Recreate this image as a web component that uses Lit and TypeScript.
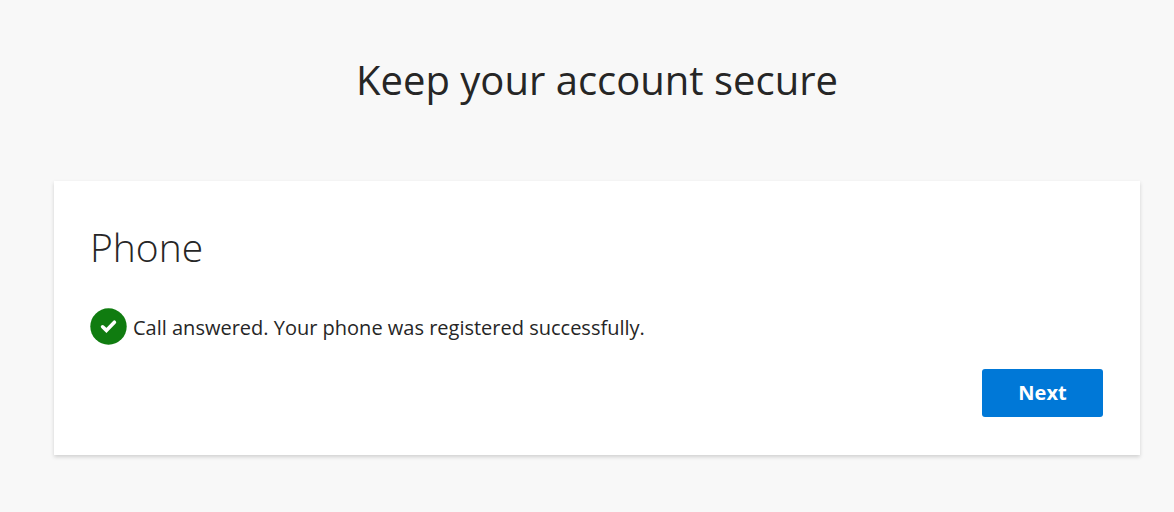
import { LitElement, html, css } from "lit";
import { customElement } from "lit/decorators.js";

@customElement("app-root")
export class AppRoot extends LitElement {
  static styles = css`
    :host {
      display: block;
      box-sizing: border-box;
      min-height: 100vh;
      padding: 52px 34px 56px 54px;
      background: #f8f8f8;
      color: #262626;
      font-family: "Segoe UI", "Open Sans", "Noto Sans", sans-serif;
    }
    .title {
      margin: 0 0 73px;
      font-size: 40px;
      line-height: 56px;
      font-weight: 400;
      text-align: center;
    }
    .card {
      padding: 38px 37px 38px 36px;
      background: #fff;
      box-shadow: 0 2px 4px rgba(0, 0, 0, 0.16);
    }
    .heading {
      margin: 0;
      font-size: 39px;
      line-height: 56px;
      font-weight: 300;
    }
    .status {
      display: flex;
      align-items: center;
      gap: 6px;
      margin: 33px 0 24px;
      font-size: 20px;
      line-height: 34px;
    }
    .badge {
      flex: none;
      width: 37px;
      height: 37px;
    }
    .message {
      padding-top: 3px;
    }
    .actions {
      display: flex;
      justify-content: flex-end;
    }
    .next {
      min-width: 121px;
      height: 48px;
      border: 0;
      border-radius: 3px;
      background: #0078d7;
      color: #fff;
      font: 700 20px/28px "Segoe UI", "Open Sans", "Noto Sans", sans-serif;
    }
  `;

  render() {
    return html`
      <h1 class="title">Keep your account secure</h1>
      <main class="card">
        <h2 class="heading">Phone</h2>
        <div class="status" role="status">
          <svg class="badge" viewBox="0 0 37 37" aria-hidden="true">
            <circle cx="18.5" cy="18.5" r="18.2" fill="#107c10" />
            <path
              d="M12.6 18.8l3.8 3.6 8-8.2"
              fill="none"
              stroke="#fff"
              stroke-width="3.6"
              stroke-linecap="round"
            />
          </svg>
          <span class="message">Call answered. Your phone was registered successfully.</span>
        </div>
        <div class="actions"><button class="next" type="button">Next</button></div>
      </main>
    `;
  }
}
